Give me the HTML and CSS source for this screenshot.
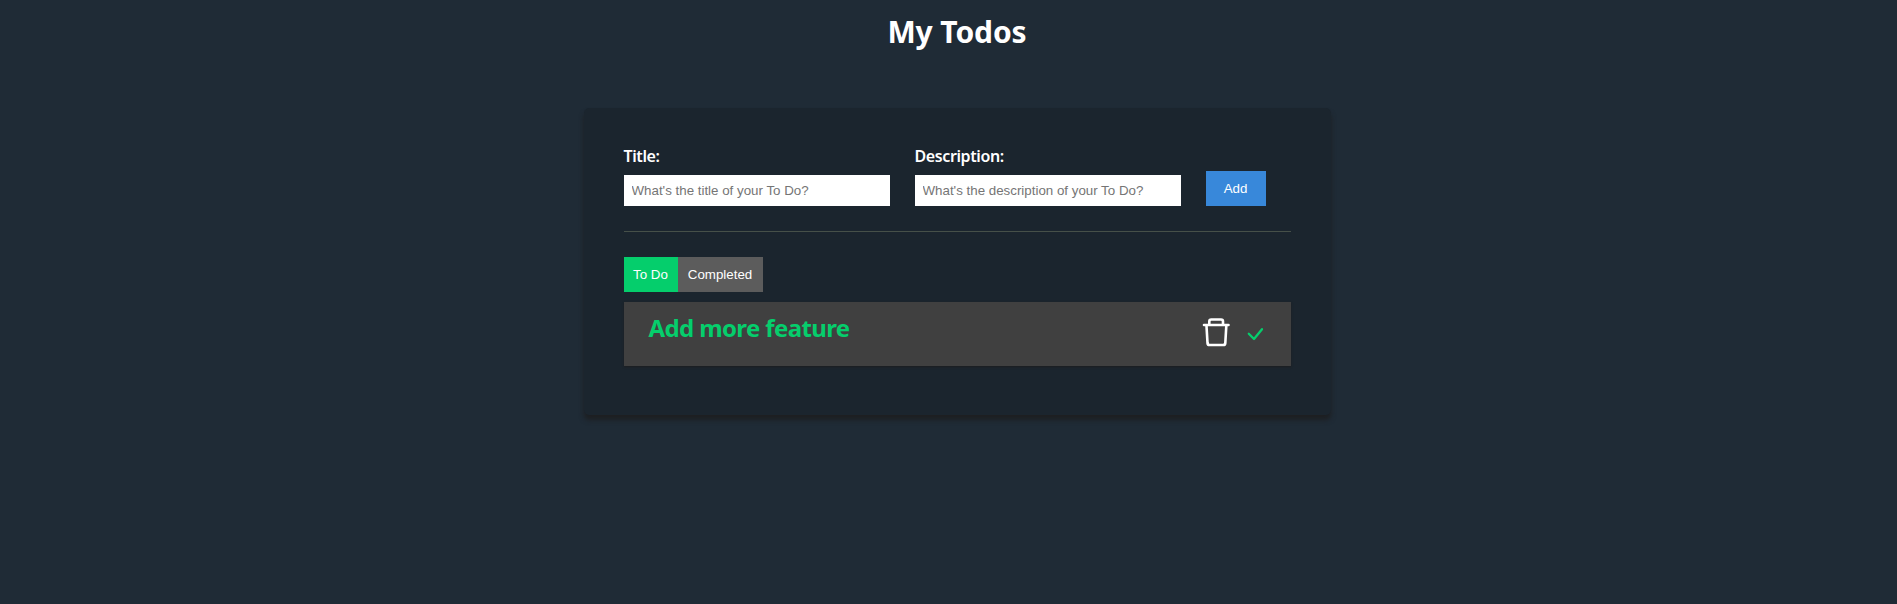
FILE: index.html
```
<!DOCTYPE html>
<html lang="en">
<head>
<meta charset="utf-8">
<title>My Todos</title>
<link rel="stylesheet" href="styles.css">
</head>
<body>
<div class="app">
  <h1 class="heading">My Todos</h1>
  <main class="card">
    <form class="todo-form">
      <div class="field">
        <label class="label" for="title">Title:</label>
        <input class="input" id="title" type="text" placeholder="What's the title of your To Do?">
      </div>
      <div class="field">
        <label class="label" for="description">Description:</label>
        <input class="input" id="description" type="text" placeholder="What's the description of your To Do?">
      </div>
      <button class="button add" type="button">Add</button>
    </form>
    <div class="tabs">
      <button class="button tab tab-active" type="button">To Do</button>
      <button class="button tab tab-done" type="button">Completed</button>
    </div>
    <article class="item">
      <h2 class="item-title">Add more feature</h2>
      <div class="actions">
        <svg class="trash" viewBox="0 0 28 30" width="28" height="30">
          <path d="M2 8H26.500M7.300 7V4.500Q7.300 2.500 9.300 2.500H19Q21 2.500 21 4.500V7M4.500 9L5.500 26Q5.700 28 7.500 28H21.300Q23.100 28 23.300 26L24.300 9"/>
        </svg>
        <svg class="check" viewBox="0 0 16 13" width="16" height="13">
          <path d="M1.800 6.800L7 12L15 2.200"/>
        </svg>
      </div>
    </article>
  </main>
</div>
</body>
</html>
```
FILE: styles.css
```
* { box-sizing: border-box; margin: 0; padding: 0; }
body {
  min-height: 604px;
  background: #1f2b36;
  color: #fff;
  font-family: "Noto Sans", sans-serif;
}
.app {
  display: flex;
  flex-direction: column;
  align-items: center;
  padding: 8px 0 0 17px;
}
.heading { height: 100px; font-size: 30px; font-weight: 700; line-height: 48px; letter-spacing: -0.1px; }
.card {
  width: 747px;
  height: 307px;
  padding: 35px 40px;
  border-radius: 5px;
  background: #1b252e;
  box-shadow: 0 5px 5px #1d1f22;
}
.todo-form {
  display: flex;
  align-items: flex-end;
  gap: 25px;
  height: 89px;
  padding-bottom: 25px;
  border-bottom: 1px solid #465049;
}
.field { display: flex; flex-direction: column; gap: 7px; }
.label { font-size: 16px; font-weight: 600; line-height: 24px; letter-spacing: -0.4px; }
.input {
  width: 266px;
  height: 31px;
  padding: 0 8px;
  border: 0;
  background: #fff;
  font: 13.333px "Liberation Sans", Arial, sans-serif;
}
.input::placeholder { color: #757575; }
.button {
  height: 35px;
  border: 0;
  color: #fff;
  font: 13.333px "Liberation Sans", Arial, sans-serif;
}
.add { width: 60px; background: #3888da; }
.tabs { display: flex; margin-top: 25px; }
.tab-active { width: 54px; background: #05ce6c; }
.tab-done { width: 85px; background: #5c5c5c; }
.item {
  display: flex;
  justify-content: space-between;
  height: 64px;
  margin-top: 10px;
  padding: 8px 28px 0 25px;
  background: #404040;
  box-shadow: 0 1px 2px #1d1e20;
}
.item-title { color: #05ce6c; font-size: 24px; font-weight: 700; line-height: 36px; letter-spacing: -0.62px; }
.actions { display: flex; gap: 17px; padding-top: 7px; }
.trash, .check { fill: none; stroke: #fff; stroke-width: 2.6; stroke-linejoin: round; stroke-linecap: round; }
.check { margin-top: 10px; stroke: #05ce6c; stroke-width: 2.3; overflow: visible; }
```
